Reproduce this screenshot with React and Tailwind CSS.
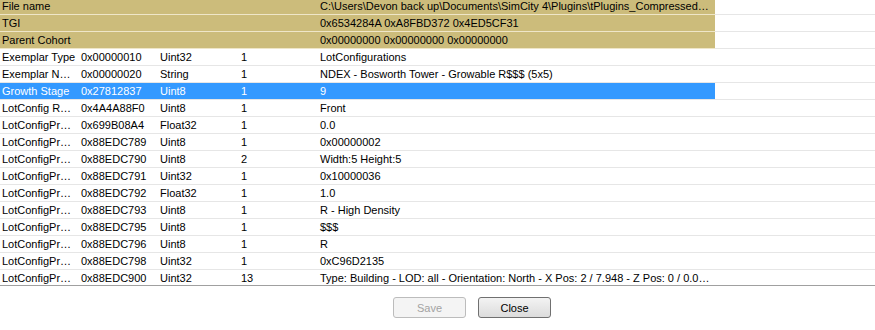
const header = [
  { label: "File name", value: "C:\\Users\\Devon back up\\Documents\\SimCity 4\\Plugins\\tPlugins_Compressed-0001\\NDEX - Bosworth Tower.SC4Lot" },
  { label: "TGI", value: "0x6534284A 0xA8FBD372 0x4ED5CF31" },
  { label: "Parent Cohort", value: "0x00000000 0x00000000 0x00000000" },
];

const rows = [
  ["Exemplar Type", "0x00000010", "Uint32", "1", "LotConfigurations"],
  ["Exemplar Name", "0x00000020", "String", "1", "NDEX - Bosworth Tower - Growable R$$$ (5x5)"],
  ["Growth Stage", "0x27812837", "Uint8", "1", "9", true],
  ["LotConfig Round", "0x4A4A88F0", "Uint8", "1", "Front"],
  ["LotConfigPropSize", "0x699B08A4", "Float32", "1", "0.0"],
  ["LotConfigPropVersion", "0x88EDC789", "Uint8", "1", "0x00000002"],
  ["LotConfigPropSize", "0x88EDC790", "Uint8", "2", "Width:5 Height:5"],
  ["LotConfigPropID", "0x88EDC791", "Uint32", "1", "0x10000036"],
  ["LotConfigPropMaxSlope", "0x88EDC792", "Float32", "1", "1.0"],
  ["LotConfigPropZone", "0x88EDC793", "Uint8", "1", "R - High Density"],
  ["LotConfigPropWealth", "0x88EDC795", "Uint8", "1", "$$$"],
  ["LotConfigPropPurpose", "0x88EDC796", "Uint8", "1", "R"],
  ["LotConfigPropFamily", "0x88EDC798", "Uint32", "1", "0xC96D2135"],
  ["LotConfigPropObject", "0x88EDC900", "Uint32", "13", "Type: Building - LOD: all - Orientation: North - X Pos: 2 / 7.948 - Z Pos: 0 / 0.0 - Y Pos: 1"],
];

const Cell = ({ w, children }) => (
  <div className={`${w} shrink-0 pl-[2px] pr-[3px] truncate`}>{children}</div>
);

export default function App() {
  return (
    <div className="w-[875px] h-[330px] bg-white overflow-hidden text-[11px] leading-[16px] text-black" style={{ fontFamily: "Tahoma, 'Liberation Sans', Arial, sans-serif" }}>
      <div className="h-[286px] overflow-hidden border-b border-[#a0a0a0]">
        <div className="-mt-[2px]">
          {header.map((h) => (
            <div key={h.label} className="flex h-[17px] border-b border-[#e6e6e6]">
              <div className="w-[715px] shrink-0 flex bg-[#ccbc7b] border-b border-[#efe6c8] -mb-px">
                <Cell w="w-[318px]">{h.label}</Cell>
                <Cell w="w-[397px]">{h.value}</Cell>
              </div>
            </div>
          ))}
          {rows.map((r, i) => (
            <div key={i} className="flex h-[17px] border-b border-[#e6e6e6]">
              <div className={`w-[715px] shrink-0 flex ${r[5] ? "bg-[#3399ff] text-white" : ""}`}>
                <Cell w="w-[79px]">{r[0]}</Cell>
                <Cell w="w-[79px]">{r[1]}</Cell>
                <Cell w="w-[81px]">{r[2]}</Cell>
                <Cell w="w-[79px]">{r[3]}</Cell>
                <Cell w="w-[397px]">{r[4]}</Cell>
              </div>
            </div>
          ))}
        </div>
      </div>
      <div className="flex gap-[12px] pl-[393px] pt-[11px]">
        <button disabled className="w-[73px] h-[21px] rounded-[3px] border border-[#bcbcbc] bg-[#f4f4f4] text-[#a3a3a3]">
          Save
        </button>
        <button className="w-[73px] h-[21px] rounded-[3px] border border-[#707070] bg-gradient-to-b from-[#f3f3f3] to-[#dcdcdc] text-black">
          Close
        </button>
      </div>
    </div>
  );
}
